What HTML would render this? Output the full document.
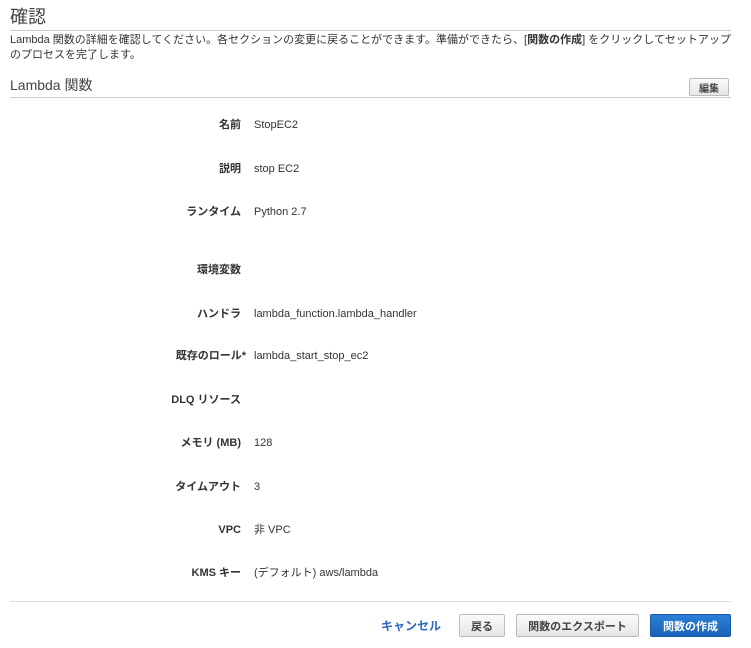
<!DOCTYPE html>
<html><head><meta charset="utf-8"><style>
*{margin:0;padding:0;box-sizing:border-box}
body{width:751px;height:648px;background:#fff;font-family:"Liberation Sans","Noto Sans CJK JP",sans-serif;color:#333;position:relative;overflow:hidden;font-size:11px}
.a{position:absolute;white-space:nowrap}
.lbl,.val{position:absolute;height:16px;line-height:16px;font-size:11px;color:#333;display:flex;align-items:center;white-space:nowrap}
.lbl{right:510px;font-weight:bold;justify-content:flex-end}
.val{left:254px}
.btn{position:absolute;border:1px solid #bbb;border-radius:2px;background:linear-gradient(#fafafa,#e6e6e6);font-weight:bold;font-size:11px;color:#444;display:flex;align-items:center;justify-content:center}
</style></head><body>
<div class="a" style="left:10px;top:5px;font-size:18px;color:#444;line-height:24px">確認</div>
<div class="a" style="left:10px;top:30px;width:721px;border-top:1px solid #ccc"></div>
<div class="a" style="left:10px;top:33px;font-size:11px;line-height:15px;white-space:normal;width:725px">Lambda 関数の詳細を確認してください。各セクションの変更に戻ることができます。準備ができたら、[<b>関数の作成</b>] をクリックしてセットアップのプロセスを完了します。</div>
<div class="a" style="left:10px;top:75px;font-size:14px;color:#444;line-height:20px">Lambda 関数</div>
<div class="a" style="left:10px;top:97px;width:721px;border-top:1px solid #ccc"></div>
<div class="btn" style="left:689px;top:78px;width:40px;height:18px;font-size:10px">編集</div>
<div class="lbl" style="top:117px">名前</div><div class="val" style="top:117px">StopEC2</div>
<div class="lbl" style="top:161px">説明</div><div class="val" style="top:161px">stop EC2</div>
<div class="lbl" style="top:204px">ランタイム</div><div class="val" style="top:204px">Python 2.7</div>
<div class="lbl" style="top:262px">環境変数</div>
<div class="lbl" style="top:306px">ハンドラ</div><div class="val" style="top:306px">lambda_function.lambda_handler</div>
<div class="lbl" style="top:348px;right:505px">既存のロール*</div><div class="val" style="top:348px">lambda_start_stop_ec2</div>
<div class="lbl" style="top:392px">DLQ リソース</div>
<div class="lbl" style="top:435px">メモリ (MB)</div><div class="val" style="top:435px">128</div>
<div class="lbl" style="top:479px">タイムアウト</div><div class="val" style="top:479px">3</div>
<div class="lbl" style="top:522px">VPC</div><div class="val" style="top:522px">非 VPC</div>
<div class="lbl" style="top:565px">KMS キー</div><div class="val" style="top:565px">(デフォルト) aws/lambda</div>
<div class="a" style="left:10px;top:601px;width:721px;border-top:1px solid #ddd"></div>
<div class="a" style="left:381px;top:618px;font-weight:bold;color:#2a6ac0;font-size:12px;line-height:16px">キャンセル</div>
<div class="btn" style="left:459px;top:614px;width:46px;height:23px">戻る</div>
<div class="btn" style="left:516px;top:614px;width:123px;height:23px">関数のエクスポート</div>
<div class="btn" style="left:650px;top:614px;width:81px;height:23px;background:linear-gradient(#2b7fd6,#1a62b8);border-color:#1a5aa8;color:#fff">関数の作成</div>
</body></html>
